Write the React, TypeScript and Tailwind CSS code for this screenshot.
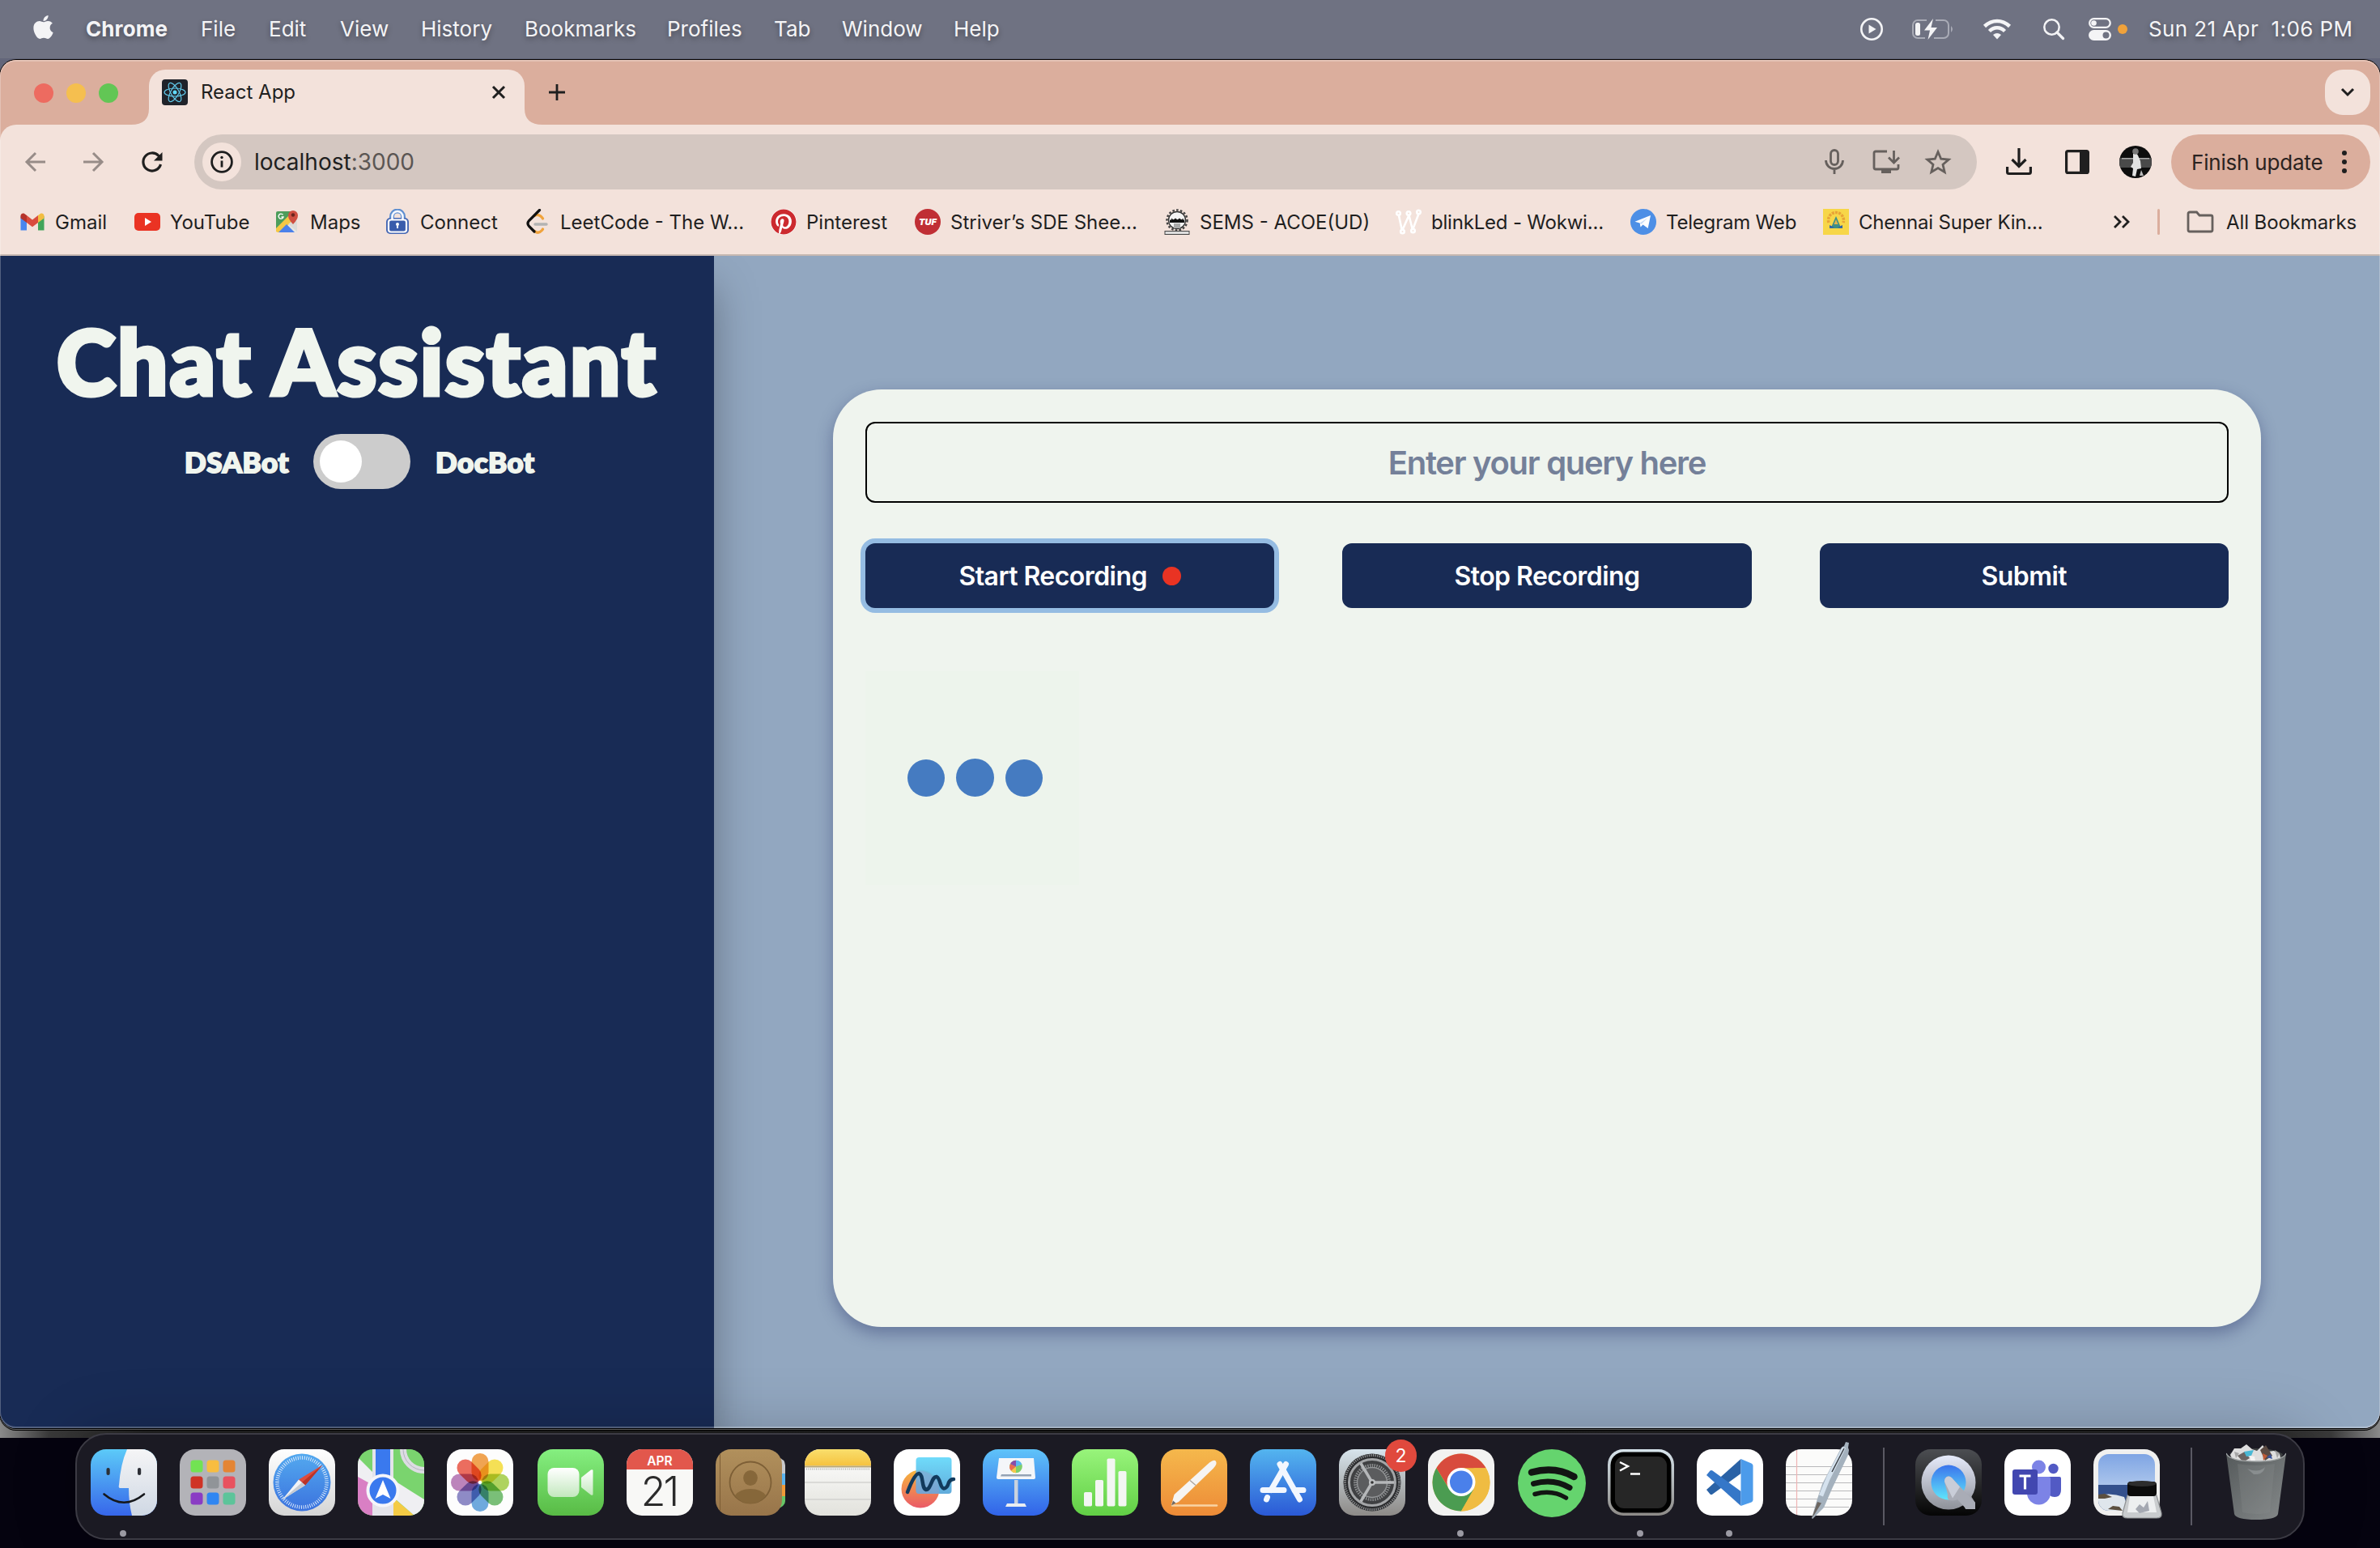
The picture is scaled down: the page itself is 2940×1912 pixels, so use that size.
import React from "react";
import { FaApple, FaPinterest } from "react-icons/fa";

const MENU: [string, string][] = [
  ["File", "w-[84px]"],
  ["Edit", "w-[88px]"],
  ["View", "w-[100px]"],
  ["History", "w-[128px]"],
  ["Bookmarks", "w-[176px]"],
  ["Profiles", "w-[132px]"],
  ["Tab", "w-[84px]"],
  ["Window", "w-[138px]"],
  ["Help", "w-[80px]"],
];

function MenuBar() {
  return (
    <header className="flex h-[72px] items-center bg-[#6f7282] pb-px pl-10 text-[26px] leading-none text-[#f4f4f6] [text-shadow:0_3px_6px_rgba(0,0,0,0.35)]">
      <FaApple className="mb-1 h-[33px] w-[27px] shrink-0" />
      <span className="ml-[39px] w-[142px] text-[26px] font-bold tracking-[0.1px]">Chrome</span>
      {MENU.map(([t, w]) => (
        <span key={t} className={w + " whitespace-nowrap"}>
          {t}
        </span>
      ))}
      <div className="ml-auto flex items-center pr-[34px]">
        <svg className="h-[30px] w-[30px]" viewBox="0 0 30 30" fill="none">
          <circle cx="15" cy="15" r="12.7" stroke="#f4f4f6" strokeWidth="2.6" />
          <path d="M11.5 9.5v11l9-5.5z" fill="#f4f4f6" />
        </svg>
        <svg className="ml-[33px] h-[30px] w-[54px]" viewBox="0 0 54 30" fill="none">
          <path d="M20 4H9a6 6 0 0 0-6 6v10a6 6 0 0 0 6 6h9M31 4h10a6 6 0 0 1 6 6v10a6 6 0 0 1-6 6H29" stroke="#a9abb6" strokeWidth="2" />
          <path d="M50 11q4 4 0 8z" fill="#a9abb6" />
          <rect x="6" y="7" width="6" height="16" rx="2.5" fill="#f4f4f6" />
          <path d="M28 2L17 16.5h7L21.500 28 33 13h-7.500z" fill="#f4f4f6" />
        </svg>
        <svg className="ml-[35px] h-[28px] w-[36px]" viewBox="0 0 36 28" fill="none">
          <path d="M2.500 10.500Q9.500 4 18 4t15.500 6.500" stroke="#f4f4f6" strokeWidth="4.600" />
          <path d="M8.500 16.500Q12.500 12.300 18 12.300t9.500 4.200" stroke="#f4f4f6" strokeWidth="4.400" />
          <path d="M18 26.500l-5-5.500q5-4 10 0z" fill="#f4f4f6" />
        </svg>
        <svg className="ml-[38px] h-[28px] w-[28px]" viewBox="0 0 28 28" fill="none">
          <circle cx="11.500" cy="11.500" r="9.200" stroke="#f4f4f6" strokeWidth="2.500" />
          <path d="M18 18l7.500 7.500" stroke="#f4f4f6" strokeWidth="3.200" strokeLinecap="round" />
        </svg>
        <svg className="ml-[28px] h-[30px] w-[30px]" viewBox="0 0 30 30">
          <rect x="2.200" y="2.200" width="25.500" height="10.600" rx="5.300" fill="none" stroke="#f4f4f6" strokeWidth="2.300" />
          <circle cx="7.500" cy="7.500" r="3.300" fill="#f4f4f6" />
          <rect x="1" y="16" width="28" height="13" rx="6.500" fill="#f4f4f6" />
          <circle cx="22.500" cy="22.500" r="4" fill="#6f7282" />
        </svg>
        <span className="ml-[7px] size-3 rounded-full bg-[#f0a23b]" />
        <span className="ml-[26px] w-[252px] whitespace-pre text-right tracking-[0.4px]">Sun 21 Apr  1:06 PM</span>
      </div>
    </header>
  );
}

function ReactFavicon() {
  return (
    <svg className="size-8" viewBox="0 0 32 32" fill="none">
      <rect width="32" height="32" rx="4" fill="#20232a" />
      <g stroke="#61c9ea" strokeWidth="1.200">
        <ellipse cx="16" cy="16" rx="13" ry="5" />
        <ellipse cx="16" cy="16" rx="13" ry="5" transform="rotate(60 16 16)" />
        <ellipse cx="16" cy="16" rx="13" ry="5" transform="rotate(120 16 16)" />
      </g>
      <circle cx="16" cy="16" r="2.500" fill="#61dafb" />
    </svg>
  );
}

function TabStrip() {
  return (
    <div className="flex h-20 items-end bg-[#dbae9d] pl-[42px] pr-3">
      <div className="flex h-[68px] w-[120px] gap-4 pt-[17px]">
        <span className="size-6 rounded-full bg-[#ed6b60]" />
        <span className="size-6 rounded-full bg-[#f5bf4f]" />
        <span className="size-6 rounded-full bg-[#62c655]" />
      </div>
      <svg className="h-[20px] w-[22px]" viewBox="0 0 22 20">
        <path d="M22 0V20H0Q22 20 22 0" fill="#f3e2db" />
      </svg>
      <div className="flex h-[68px] w-[464px] items-center rounded-t-[20px] bg-[#f3e2db] pb-3 pl-4">
        <ReactFavicon />
        <span className="ml-4 grow text-[24px] text-[#1f1f1f]">React App</span>
        <svg className="mr-[23px] size-[18px]" viewBox="0 0 18 18">
          <path d="M2 2l14 14M16 2L2 16" stroke="#1f1f1f" strokeWidth="3" />
        </svg>
      </div>
      <svg className="h-[20px] w-[22px]" viewBox="0 0 22 20">
        <path d="M0 0V20H22Q0 20 0 0" fill="#f3e2db" />
      </svg>
      <svg className="mb-[30px] ml-[8px] size-5" viewBox="0 0 20 20">
        <path d="M10 0v20M0 10h20" stroke="#1f1f1f" strokeWidth="2.800" />
      </svg>
      <div className="mb-3 ml-auto flex size-14 items-center justify-center rounded-[22px] bg-[#f3e2db]">
        <svg className="h-3 w-[18px]" viewBox="0 0 18 12" fill="none">
          <path d="M2 2l7 7 7-7" stroke="#1f1f1f" strokeWidth="3" />
        </svg>
      </div>
    </div>
  );
}

function Toolbar() {
  return (
    <div className="rounded-t-[20px] bg-[#f3e2db] flex h-[92px] items-center pl-7 pr-3">
      <svg className="size-8" viewBox="0 0 32 32" fill="none" stroke="#978c88" strokeWidth="3">
        <path d="M28 16H6M16 5L5 16l11 11" />
      </svg>
      <svg className="ml-[39px] size-8" viewBox="0 0 32 32" fill="none" stroke="#978c88" strokeWidth="3">
        <path d="M4 16h22M16 5l11 11-11 11" />
      </svg>
      <svg className="ml-[41px] size-8" viewBox="0 0 32 32" fill="none" stroke="#1f1f1f" strokeWidth="3.200">
        <path d="M26.500 19A11 11 0 1 1 24 8.500L27 12" />
        <path d="M28.500 4v10.500H18z" fill="#1f1f1f" stroke="none" />
      </svg>
      <div className="ml-9 flex h-[68px] w-[2202px] items-center rounded-full bg-[#d4c7c1] pl-[10px] pr-[31px]">
        <div className="flex size-12 items-center justify-center rounded-full bg-[#f3e2db]">
          <svg className="size-7" viewBox="0 0 28 28" fill="none">
            <circle cx="14" cy="14" r="12.400" stroke="#1f1f1f" strokeWidth="2.800" />
            <path d="M14 12.500v8" stroke="#1f1f1f" strokeWidth="2.800" />
            <circle cx="14" cy="8.500" r="1.700" fill="#1f1f1f" />
          </svg>
        </div>
        <span className="ml-4 grow text-[28px] leading-none text-[#1f1f1f]">
          localhost<span className="text-[#5b5654]">:3000</span>
        </span>
        <svg className="h-[34px] w-[26px]" viewBox="0 0 26 34" fill="none" stroke="#66605d" strokeWidth="2.800">
          <rect x="8.500" y="2.500" width="9" height="18" rx="4.500" />
          <path d="M2.500 15a10.500 10.500 0 0 0 21 0M13 25.500V32" />
        </svg>
        <svg className="ml-[33px] h-[32px] w-[36px]" viewBox="0 0 36 32" fill="none" stroke="#66605d" strokeWidth="2.800">
          <path d="M19 3H5a2 2 0 0 0-2 2v18a2 2 0 0 0 2 2h26a2 2 0 0 0 2-2v-4" />
          <path d="M27.500 2v14M21 10.500l6.500 6.500 6.500-6.500" />
          <path d="M12 25h12v5H12z" fill="#66605d" stroke="none" />
        </svg>
        <svg className="ml-[29px] size-[34px]" viewBox="0 0 34 34" fill="none" stroke="#66605d" strokeWidth="2.800">
          <path d="M17 4.500l3.700 8.700 9.500.8-7.200 6.200 2.200 9.300L17 24.600l-8.200 4.900L11 20.200 3.800 14l9.500-.8z" />
        </svg>
      </div>
      <svg className="ml-[35px] h-[34px] w-[34px]" viewBox="0 0 34 34" fill="none" stroke="#1f1f1f" strokeWidth="3.200">
        <path d="M17 0v22M8.500 14L17 22.500 25.500 14M2.600 23v6.500a2 2 0 0 0 2 2h24.800a2 2 0 0 0 2-2V23" />
      </svg>
      <svg className="ml-10 h-[30px] w-[30px]" viewBox="0 0 30 30">
        <rect x="1.600" y="1.600" width="26.800" height="26.800" rx="2" fill="none" stroke="#1f1f1f" strokeWidth="3.200" />
        <path d="M18 1h10v28H18z" fill="#1f1f1f" />
      </svg>
      <svg className="ml-[37px] size-10" viewBox="0 0 40 40">
        <defs>
          <clipPath id="avatar">
            <circle cx="20" cy="20" r="20" />
          </clipPath>
        </defs>
        <g clipPath="url(#avatar)">
          <path d="M0 0h40v40H0z" fill="#0d0d0d" />
          <path d="M0 15h40v12H0z" fill="#4a4a4a" />
          <path d="M3 15h34v1.500H3z" fill="#aaa" />
          <path d="M17 10q4-3 6 2l3 7 1 9-5 1-2 9-4-1 1-9-3-2 3-5z" fill="#e2e2e2" />
          <circle cx="20" cy="7" r="3.800" fill="#777" />
          <path d="M27 30l3 7h-5z" fill="#bbb" />
        </g>
      </svg>
      <div className="ml-6 flex h-[68px] w-[246px] items-center rounded-full bg-[#dbae9d] pl-[25px]">
        <span className="w-[176px] whitespace-nowrap pt-[2px] text-[26px] leading-none tracking-[-0.2px] text-[#2a2220]">
          Finish update
        </span>
        <div className="ml-[10px] flex flex-col gap-[5px]">
          <span className="size-[6px] rounded-full bg-[#1f1f1f]" />
          <span className="size-[6px] rounded-full bg-[#1f1f1f]" />
          <span className="size-[6px] rounded-full bg-[#1f1f1f]" />
        </div>
      </div>
    </div>
  );
}

const GmailIcon = (
  <svg className="size-8" viewBox="0 0 32 32">
    <path d="M1.500 9v17.500H9V14z" fill="#4a86ee" />
    <path d="M30.500 9v17.500H23V14z" fill="#42a55a" />
    <path d="M1.500 8.500Q2 5 5.500 5.500L9 8v9l-7.500-5.500z" fill="#b5332b" />
    <path d="M30.500 8.500Q30 5 26.500 5.500L23 8v9l7.500-5.500z" fill="#f2bd42" />
    <path d="M9 8l7 5.500L23 8v9l-7 5.300L9 17z" fill="#d94c3e" />
  </svg>
);
const YouTubeIcon = (
  <svg className="size-8" viewBox="0 0 32 32">
    <rect y="5" width="32" height="22" rx="5" fill="#ea3323" />
    <path d="M13 11v10l8-5z" fill="#fff" />
  </svg>
);
const MapsIcon = (
  <svg className="size-8" viewBox="0 0 32 32">
    <rect x="2" y="3" width="26" height="26" rx="2" fill="#e8e6e2" />
    <path d="M2 5q0-2 2-2h18v6L2 28z" fill="#4d9d5b" />
    <path d="M2 28V24L19 7l6 5L8 29H4z" fill="#f5c844" />
    <path d="M5 29l10-10 10 10z" fill="#4b81ea" />
    <path d="M17 19l11 9V15l-5-1z" fill="#dcdad6" />
    <path d="M23 19q-6-6-6-11a6 6 0 0 1 12 0q0 5-6 11" fill="#cf4f41" />
    <circle cx="23" cy="7.500" r="2.200" fill="#6b241d" />
    <path d="M10.500 7.300A3 3 0 1 0 11 10H8.500" stroke="#fff" strokeWidth="1.400" fill="none" />
  </svg>
);
const ConnectIcon = (
  <svg className="size-8" viewBox="0 0 32 32" fill="none">
    <path d="M9 14V9.500a7 7 0 0 1 14 0V14" stroke="#5f8fd0" strokeWidth="6" />
    <rect x="2" y="11" width="28" height="20" rx="5" fill="#4668b4" />
    <path d="M9.500 14V9.500a6.500 6.500 0 0 1 13 0V14" stroke="#f5f8ff" strokeWidth="2.600" />
    <rect x="5" y="13.500" width="22" height="15" rx="3" fill="#3a5cab" stroke="#fff" strokeWidth="2.200" />
    <circle cx="16" cy="19" r="2" fill="#fff" />
    <path d="M16 19v5" stroke="#fff" strokeWidth="2" />
  </svg>
);
const LeetIcon = (
  <svg className="size-8" viewBox="0 0 32 32" fill="none" strokeLinecap="round">
    <path d="M12.500 8.500Q17 5.500 21.500 10.500l1 1.500M12.500 27.500Q17 31.500 21.500 26.500l1-1.500" stroke="#f0a33c" strokeWidth="3.200" />
    <path d="M18.500 1.500L5.500 14.500q-3 3.500 0 7L12 28" stroke="#111" strokeWidth="3.200" />
    <path d="M13 19h14" stroke="#b3b3b3" strokeWidth="3.400" />
  </svg>
);
const TufIcon = (
  <span className="flex size-8 items-center justify-center rounded-full bg-[#c02f35] text-[11px] font-black italic leading-none text-white">
    TUF
  </span>
);
const SemsIcon = (
  <svg className="size-8" viewBox="0 0 32 32" fill="none">
    <circle cx="16" cy="14" r="12.500" stroke="#444" strokeWidth="2.500" strokeDasharray="2.600 2.200" />
    <circle cx="16" cy="14" r="10.500" fill="#f4f4f4" stroke="#333" strokeWidth="1.300" />
    <path d="M7 13.500h18v3.500H7z" fill="#111" />
    <path d="M9 11.500l2.500 2 2.500-2 2.500 2 2.500-2 2.500 2 2-2v3H9z" fill="#111" />
    <path d="M12 18h8v6h-8z" fill="#aaa" />
    <rect x="1" y="27.500" width="30" height="4" fill="#ddd" stroke="#444" />
  </svg>
);
const WokwiIcon = (
  <svg className="size-8" viewBox="0 0 32 32" fill="none" stroke="#fff" strokeWidth="2.600">
    <path d="M3.500 6l4.500 21L16 9M16 6l5 20 7.500-20" />
    <circle cx="3.500" cy="5.500" r="2.300" fill="#f3e2db" />
    <circle cx="16" cy="5.500" r="2.300" fill="#f3e2db" />
    <circle cx="28.500" cy="4" r="2.300" fill="#f3e2db" />
    <circle cx="8.500" cy="28" r="2.300" fill="#f3e2db" />
    <circle cx="21.500" cy="27" r="2.300" fill="#f3e2db" />
  </svg>
);
const TelegramIcon = (
  <svg className="size-8" viewBox="0 0 32 32">
    <circle cx="16" cy="16" r="16" fill="#4d8fe6" />
    <path d="M5.500 15.800L25 8l-3.300 16-6.200-4.500-3 3-.8-5z" fill="#fff" />
    <path d="M11.700 17.500L21.500 11l-8 8z" fill="#c8dcf6" />
  </svg>
);
const ChennaiIcon = (
  <svg className="size-8" viewBox="0 0 32 32">
    <path d="M0 0h32v32H0z" fill="#f7d648" />
    <path d="M7 17a9.500 9.500 0 1 1 18 0" fill="none" stroke="#e8a336" strokeWidth="3.500" strokeDasharray="3 1.200" />
    <path d="M16 9l6.500 15h-13z" fill="#3f8f86" />
    <path d="M8 20l6 3-6 1zM24 20l-6 3 6 1z" fill="#2c5fa8" />
    <path d="M16 13l2.500 6h-5z" fill="#e6b44a" />
  </svg>
);

const BOOKMARKS: [React.ReactNode, string, string][] = [
  [GmailIcon, "Gmail", "w-[142px]"],
  [YouTubeIcon, "YouTube", "w-[173px]"],
  [MapsIcon, "Maps", "w-[136px]"],
  [ConnectIcon, "Connect", "w-[173px]"],
  [LeetIcon, "LeetCode - The W...", "w-[304px]"],
  [<FaPinterest key="p" className="size-8 rounded-full bg-white text-[#cc2a2f]" />, "Pinterest", "w-[178px]"],
  [TufIcon, "Striver’s SDE Shee...", "w-[308px]"],
  [SemsIcon, "SEMS - ACOE(UD)", "w-[286px]"],
  [WokwiIcon, "blinkLed - Wokwi...", "w-[290px] tracking-[-0.2px]"],
  [TelegramIcon, "Telegram Web", "w-[238px] tracking-[-0.2px]"],
  [ChennaiIcon, "Chennai Super Kin...", "w-[290px] tracking-[-0.2px]"],
];

function BookmarksBar() {
  return (
    <div className="flex h-[70px] items-center border-b-2 border-[#c6b8b1] bg-[#f3e2db] pb-[12px] pl-6 text-[24px] leading-none text-[#1f1f1f]">
      {BOOKMARKS.map(([icon, label, w]) => (
        <div key={label} className={w + " flex shrink-0 items-center gap-3 whitespace-nowrap"}>
          {icon}
          <span className="pt-px">{label}</span>
        </div>
      ))}
      <svg className="ml-[68px] h-4 w-[22px]" viewBox="0 0 22 16" fill="none" stroke="#1f1f1f" strokeWidth="2.800">
        <path d="M2 1l7 7-7 7M12 1l7 7-7 7" />
      </svg>
      <span className="ml-[33px] h-8 w-[3px] rounded bg-[#dbae9d]" />
      <svg className="ml-[33px] h-[28px] w-[34px]" viewBox="0 0 34 28" fill="none" stroke="#66605d" strokeWidth="2.800">
        <path d="M2 4a2 2 0 0 1 2-2h8.500l3.500 4h14a2 2 0 0 1 2 2v16a2 2 0 0 1-2 2H4a2 2 0 0 1-2-2z" />
      </svg>
      <span className="ml-[15px] whitespace-nowrap pt-px tracking-[-0.1px]">All Bookmarks</span>
    </div>
  );
}

function Sidebar() {
  return (
    <aside className="z-10 flex h-full w-[882px] shrink-0 flex-col items-center bg-[#182b55] font-['Lato'] font-black text-[#f0f5ee] shadow-[4px_32px_50px_-6px_rgba(0,0,0,0.34)]">
      <h1 className="mt-[59px] h-[140px] whitespace-nowrap text-[110px] leading-[140px] tracking-[2.5px] [-webkit-text-stroke:5px_#f0f5ee]">
        Chat Assistant
      </h1>
      <div className="mt-[21px] flex h-[68px] items-center pl-[4px] text-[35px] tracking-[0.5px] [-webkit-text-stroke:2px_#f0f5ee]">
        <span className="w-[128px] whitespace-nowrap">DSABot</span>
        <div className="mx-[31px] flex h-[68px] w-[120px] items-center rounded-full bg-[#cccccc] pl-2">
          <span className="size-[52px] rounded-full bg-white" />
        </div>
        <span className="w-[120px] whitespace-nowrap">DocBot</span>
      </div>
    </aside>
  );
}

function Page() {
  return (
    <div className="flex grow overflow-hidden bg-[#92a7c0]">
      <Sidebar />
      <main className="flex grow justify-center pt-[165px]">
        <section className="h-[1158px] w-[1764px] rounded-[60px] bg-[#eff4ee] px-10 pt-10 shadow-[0_8px_20px_rgba(35,45,100,0.4)]">
          <div className="flex h-[100px] items-center justify-center rounded-xl border-2 border-black pt-[2px] text-[40px] font-semibold tracking-[-1.3px] text-[#748099]">
            Enter your query here
          </div>
          <div className="mt-[50px] grid grid-cols-3 gap-[84px] text-[32px] font-semibold tracking-[-0.55px] text-white">
            <button className="flex h-20 items-center justify-center gap-[19px] rounded-xl bg-[#182b55] pt-px shadow-[0_0_0_6px_#95bce2]">
              Start Recording
              <span className="size-[23px] rounded-full bg-[#e93323]" />
            </button>
            <button className="h-20 rounded-xl bg-[#182b55] pt-[2px]">Stop Recording</button>
            <button className="h-20 rounded-xl bg-[#182b55] pt-[2px]">Submit</button>
          </div>
          <div className="mt-[78px] flex h-[264px] w-[264px] items-center justify-center gap-[14px] bg-[#edf4ec] pb-px pl-[7px]">
            <span className="size-[46px] rounded-full bg-[#457bc1]" />
            <span className="size-[47px] rounded-full bg-[#457bc1]" />
            <span className="size-[46px] rounded-full bg-[#457bc1]" />
          </div>
        </section>
      </main>
    </div>
  );
}

function Tile({ bg, children }: { bg: string; children?: React.ReactNode }) {
  return (
    <svg className="size-[82px] overflow-hidden rounded-[19px]" viewBox="0 0 82 82">
      <rect width="82" height="82" fill={bg} />
      {children}
    </svg>
  );
}

function Grad({ id, a, b, diag }: { id: string; a: string; b: string; diag?: boolean }) {
  return (
    <linearGradient id={id} x1="0" y1="0" x2={diag ? "1" : "0"} y2="1">
      <stop offset="0" stopColor={a} />
      <stop offset="1" stopColor={b} />
    </linearGradient>
  );
}

function Finder() {
  return (
    <Tile bg="url(#finder)">
      <path d="M45 0H82V82H51Q47 66 47 48H36Q34 47 35 44Q37 18 45 0" fill="url(#finderw)" />
      <rect x="19.500" y="23" width="4.200" height="9" rx="2" fill="#2c2f36" />
      <rect x="58" y="23" width="4.200" height="9" rx="2" fill="#2c2f36" />
      <path d="M16.500 55.500Q41 76 66 55.500" stroke="#16181c" strokeWidth="2.600" fill="none" strokeLinecap="round" />
    </Tile>
  );
}

const PADS = ["#72e353", "#f8bd40", "#e48535", "#cf3325", "#909498", "#e8525f", "#8a3cc4", "#2f86f2", "#5cc49a"];
function Launchpad() {
  return (
    <Tile bg="#b3b3b8">
      {PADS.map((c, i) => (
        <rect key={c} x={13.5 + (i % 3) * 20} y={13.5 + Math.floor(i / 3) * 20} width="15" height="15" rx="3.500" fill={c} />
      ))}
    </Tile>
  );
}

function Safari() {
  return (
    <Tile bg="url(#silver)">
      <circle cx="41" cy="41" r="35.500" fill="url(#safari)" />
      <circle cx="41" cy="41" r="30.500" fill="none" stroke="#e8f2fd" strokeWidth="4.500" strokeDasharray="0.900 1.760" />
      <path d="M66.500 19.500L37 37.500 45 44.500z" fill="#dd4b3c" />
      <path d="M16.500 62.500L37 37.500 45 44.500z" fill="#f1f3f6" />
      <path d="M66.500 19.500L41 41l4 3.500z" fill="#b83429" />
      <path d="M16.500 62.500L41 41l4 3.500z" fill="#c6cbd2" />
    </Tile>
  );
}

function MapsTile() {
  return (
    <Tile bg="#7ad46e">
      <path d="M0 30L30 56V82H0z" fill="#d97fc4" />
      <path d="M44 60L70 82H44z" fill="#f4cb45" />
      <path d="M0 10L18 28 44 38 82 62V82H70L40 56 0 34z" fill="#efeff2" />
      <path d="M18 0h26v82H18z" fill="#e4e4ea" />
      <path d="M22 0h18v40H22z" fill="#3a79ee" />
      <circle cx="82" cy="0" r="26" fill="#7ad46e" stroke="#dcdce2" strokeWidth="8" />
      <circle cx="82" cy="0" r="26" fill="none" stroke="#b4b4c0" strokeWidth="1" />
      <circle cx="31" cy="51" r="18.500" fill="#3a79ee" stroke="#f5f5fa" strokeWidth="4" />
      <path d="M31 38l9.500 23L31 56l-9.500 5z" fill="#fff" />
    </Tile>
  );
}

const PETALS = ["#f0993a", "#f6de3f", "#a6cf4a", "#69b866", "#5c9fdb", "#7f7cc0", "#b574b4", "#ea5a4a"];
function Photos() {
  return (
    <Tile bg="#fdfdfd">
      {PETALS.map((c, i) => (
        <rect key={c} x="30.500" y="5" width="21" height="34" rx="10.500" fill={c} fillOpacity="0.880" transform={`rotate(${i * 45} 41 41)`} className="mix-blend-multiply" />
      ))}
    </Tile>
  );
}

function FaceTime() {
  return (
    <Tile bg="url(#green)">
      <rect x="12.500" y="23" width="39" height="36" rx="8" fill="url(#mint)" />
      <path d="M54 35L66 25.500q2.500-1 2.500 1v29q0 2-2.500 1L54 47z" fill="url(#mint)" />
    </Tile>
  );
}

function Calendar() {
  return (
    <Tile bg="#f8f8f6">
      <path d="M0 0h82v25H0z" fill="#e2574c" />
      <text x="41" y="19.500" textAnchor="middle" className="font-['Inter'] text-[15.500px] font-semibold" fill="#fff">
        APR
      </text>
      <text x="40" y="69.500" textAnchor="middle" className="font-['Inter'] text-[50px] font-light tracking-[-3px]" fill="#2b2b2b">
        21
      </text>
    </Tile>
  );
}

function Contacts() {
  return (
    <svg className="h-[82px] w-[86px]" viewBox="0 0 86 82">
      <path d="M76 10q10 2 10 10v10H76z" fill="#c9c9cc" />
      <path d="M76 30h10v14H76z" fill="#5bb3ee" />
      <path d="M76 44h10v14H76z" fill="#f19a38" />
      <path d="M76 58h10v6q0 6-10 10z" fill="#66c667" />
      <rect width="82" height="82" rx="19" fill="url(#brown)" />
      <path d="M5.500 6v70" stroke="#7d5d34" strokeWidth="1" />
      <circle cx="43" cy="41" r="25.500" fill="none" stroke="#7d5f36" strokeWidth="1.800" />
      <ellipse cx="43" cy="35.500" rx="8.800" ry="9.500" fill="#86673a" />
      <path d="M24 57q6-8 19-8t19 8q-7 10-19 10t-19-10" fill="#86673a" />
    </svg>
  );
}

function Notes() {
  return (
    <Tile bg="url(#paper)">
      <path d="M0 0h82v20.500H0z" fill="url(#yellow)" />
      <path d="M0 20.500h82v2H0z" fill="#b9a878" />
      <path d="M2 24.500h78" stroke="#b0b0ac" strokeWidth="2" strokeDasharray="1 1.400" />
      <path d="M0 41h82M0 62h82" stroke="#d2d2d0" strokeWidth="1.500" />
    </Tile>
  );
}

function Freeform() {
  return (
    <Tile bg="#fff">
      <circle cx="33" cy="49" r="23.500" fill="url(#coral)" />
      <rect x="27.500" y="10" width="44" height="45" rx="4" fill="url(#cyan)" fillOpacity="0.920" />
      <path d="M30 27a23.500 23.500 0 0 1 26 22v6H31q-3.500 0-3.500-3.500V27z" fill="#8aa5d4" fillOpacity="0.550" />
      <path d="M17 53Q26 29 31.500 30C37 32 34 48 40 50C46 50 47 33 53 34C58 36 57 48 62 48.500Q66 48.500 68 41Q70 37 74 37" fill="none" stroke="#123a5c" strokeWidth="4.500" strokeLinecap="round" />
    </Tile>
  );
}

function Keynote() {
  return (
    <Tile bg="url(#blue)">
      <path d="M39 38h4.500v31H39z" fill="#c9d2de" />
      <path d="M30 67h22l2 4H28z" fill="#e9edf2" />
      <path d="M20 11h43l2 24q0 2-2 2H19q-2 0-2-2z" fill="#f4f6f9" />
      <path d="M23 31h37v2.500H22z" fill="#94a3b5" />
      <circle cx="41" cy="21.500" r="7.800" fill="#7fcf6b" />
      <path d="M41 21.500V13.700a7.800 7.800 0 0 1 7.200 5z" fill="#5ab8f3" />
      <path d="M41 21.500V13.700a7.800 7.800 0 0 0-7 4.500z" fill="#8a4da8" />
      <path d="M41 21.500l-7-3.300a7.800 7.800 0 0 0 1 8.500z" fill="#ee6a4f" />
      <path d="M41 21.500l-6 5.200a7.800 7.800 0 0 0 6 2.600z" fill="#f6c84c" />
    </Tile>
  );
}

function Numbers() {
  return (
    <Tile bg="url(#green2)">
      <g fill="#f3f6f2">
        <rect x="15" y="53" width="10" height="17.500" rx="1.800" />
        <rect x="29" y="38" width="10" height="32.500" rx="1.800" />
        <rect x="43.500" y="11.500" width="10" height="59" rx="1.800" />
        <rect x="57.500" y="27" width="10" height="43.500" rx="1.800" />
      </g>
    </Tile>
  );
}

function Pages() {
  return (
    <Tile bg="url(#orange)">
      <path d="M14 69.500h55" stroke="#f9d3a4" strokeWidth="2.500" strokeLinecap="round" />
      <path d="M13 69l3.500-13L60 16.500q6-4.500 8-1.500T65 23.500L22 65z" fill="#f6f4f2" />
      <path d="M36 38.500l7 6" stroke="#a9a29b" strokeWidth="1.300" />
      <path d="M13 69.500l2-6 3.500 3z" fill="#6f6963" />
    </Tile>
  );
}

function AppStore() {
  return (
    <Tile bg="url(#azure)">
      <g stroke="#f2f7fe" strokeWidth="7" strokeLinecap="round" fill="none">
        <path d="M16 50.500h26M55 50.500h11" />
        <path d="M44.500 18.500L26 50.500M21.500 59.500l-1 2.500" />
        <path d="M37 18.500L61.500 62" />
      </g>
    </Tile>
  );
}

function Settings() {
  return (
    <div className="relative size-[82px]">
      <Tile bg="url(#steel)">
        <circle cx="41" cy="41" r="35.500" fill="#2a2b2d" />
        <circle cx="41" cy="41" r="33.500" fill="none" stroke="#8b8d8f" strokeWidth="3" strokeDasharray="1.300 1.300" />
        <circle cx="41" cy="41" r="28.500" fill="#3f4042" stroke="#a3a5a7" strokeWidth="3" />
        <circle cx="41" cy="41" r="21" fill="#2c2d2f" stroke="#87898b" strokeWidth="4" strokeDasharray="1.600 1.200" />
        <circle cx="41" cy="41" r="18.500" fill="#5b5c5e" stroke="#939597" strokeWidth="1.500" />
        <path d="M41 41h27M41 41L27 17.500M41 41L27 64.500" stroke="#b5b7b9" strokeWidth="3.500" />
        <circle cx="41" cy="41" r="4" fill="#bfc1c3" />
        <circle cx="41" cy="41" r="1.800" fill="#333" />
      </Tile>
      <span className="absolute -top-3 left-[57px] flex h-10 w-[39px] items-center justify-center rounded-full bg-[#e0493d] text-[23px] leading-none text-white">
        2
      </span>
    </div>
  );
}

function ChromeTile() {
  return (
    <Tile bg="#f2f2f1">
      <circle cx="41" cy="41" r="35.500" fill="#f0bc42" />
      <path d="M10.300 23.200A35.500 35.500 0 0 1 71.700 23.200H41L27 50z" fill="#d84b3d" />
      <path d="M10.300 23.200A35.500 35.500 0 0 0 41 76.500L56 50 41 41 26 49z" fill="#4b9c51" />
      <path d="M71.700 23.200A35.500 35.500 0 0 1 41 76.500L56.500 50V23.200z" fill="#f0bc42" />
      <circle cx="41" cy="40.500" r="17.500" fill="#fff" />
      <circle cx="41" cy="40.500" r="14" fill="#4a80ea" />
    </Tile>
  );
}

function Spotify() {
  return (
    <svg className="size-[84px]" viewBox="0 0 84 84" fill="none" stroke="#121513" strokeLinecap="round">
      <circle cx="42" cy="42" r="42" fill="#65d46e" stroke="none" />
      <path d="M17 28.500Q46 20.500 69.500 34" strokeWidth="8.500" />
      <path d="M19.500 42.500Q44 35.500 64 47.500" strokeWidth="7" />
      <path d="M21 55.500Q42 49.500 59.500 60" strokeWidth="5.500" />
    </svg>
  );
}

function Terminal() {
  return (
    <Tile bg="url(#steel)">
      <rect x="3.500" y="3.500" width="75" height="75" rx="16" fill="#000" />
      <rect x="9" y="9" width="64" height="64" rx="11" fill="#262626" />
      <path d="M15 16l10 5-10 5.500" stroke="#fff" strokeWidth="2.400" fill="none" />
      <path d="M28 30.500h12" stroke="#fff" strokeWidth="2.400" />
    </Tile>
  );
}

function VSCode() {
  return (
    <Tile bg="#fff">
      <path d="M12 50l4.500 5.500q1.500 1 3 0L54.500 30V12z" fill="#2a62a6" />
      <path d="M12 32l4.500-5.500q1.500-1 3 0L54.500 52v18z" fill="#3577c8" />
      <path d="M54.500 12l13 5.500q2 1 2 3v42q0 2-2 3l-13 4.500z" fill="#4c9bea" />
    </Tile>
  );
}

function TextEdit() {
  return (
    <svg className="-mt-[10px] h-[96px] w-[82px]" viewBox="0 -10 82 96">
      <rect width="82" height="82" rx="19" fill="#fbfbfa" />
      <path d="M0 21.500h82M0 31.500h82M0 41.500h82M0 51.500h82M0 61.500h82M4 71.500h74" stroke="#b9b9bb" strokeWidth="1.100" />
      <path d="M13.500 1v80" stroke="#efb4b4" strokeWidth="1.200" />
      <path d="M70 -3l2-1 2-5 4 1-1 6 1 3-1 6-20 42-10 23-14 14-1-1 7-24 6-18 23-44z" fill="#a4b1bd" />
      <path d="M70 -3l4 1.500-20 40-8 20-5-2 10-24z" fill="#d5e2ee" />
      <path d="M72 -1L57 28" stroke="#3c4046" strokeWidth="1.500" />
      <path d="M39 65l5 1.500-8 13-4 6z" fill="#6b6560" />
    </svg>
  );
}

function QuickTime() {
  return (
    <Tile bg="url(#dark)">
      <path d="M55 58l10-6 9 14v8H62z" fill="#9b9ea6" />
      <circle cx="41" cy="41" r="33.500" fill="url(#silverq)" />
      <circle cx="41" cy="41" r="21.500" fill="url(#qt)" />
      <path d="M36 40q0-6 5-6.500 3 0 6 4L74 66v8H63L52 62q-7 3-11 0-2-2-1-6z" fill="#a9acb6" />
      <path d="M36 40q0-6 5-6.500 3 0 6 4l8 9-9 14z" fill="#c9cdd8" />
    </Tile>
  );
}

function Teams() {
  return (
    <Tile bg="#fff">
      <circle cx="60.500" cy="24" r="6.200" fill="#525ac4" />
      <path d="M54 34h14q2 0 2 2v14q0 9-8 9t-8-8z" fill="#525ac4" />
      <circle cx="42.500" cy="22" r="8.500" fill="#7c83e6" />
      <path d="M28 34h27q2 0 2 2v18a14.500 14.500 0 0 1-29 0z" fill="#7c83e6" />
      <rect x="10" y="25" width="31" height="31" rx="3" fill="#4247b0" />
      <path d="M18.500 33h14M25.500 33v16.500" stroke="#fff" strokeWidth="3.200" />
    </Tile>
  );
}

function Preview() {
  return (
    <svg className="h-[86px] w-[86px]" viewBox="0 0 86 86">
      <rect width="82" height="82" rx="19" fill="#f0f0ef" />
      <clipPath id="pv">
        <rect x="6" y="6" width="70" height="70" rx="13" />
      </clipPath>
      <g clipPath="url(#pv)">
        <path d="M6 6h70v70H6z" fill="url(#sky)" />
        <path d="M6 44h70v32H6z" fill="#33508c" />
        <path d="M6 57q16-4 32 2l6 17H6z" fill="#dfe6ec" />
        <path d="M6 56l8-1 9 4-9 2H6zM18 74l6-4 8 1 4 5z" fill="#5c5040" />
      </g>
      <path d="M42 57h36l6 22q1 6-6 6H42q-7 0-6-6z" fill="#c9ccce" stroke="#8f9294" strokeWidth="1.200" />
      <path d="M45 58h29l4 20H42z" fill="#edeff0" />
      <path d="M52 74l5-6 5 4 5-8 2 12-12 3z" fill="#a5a9b2" />
      <rect x="42" y="40" width="36" height="18" rx="4" fill="#0c0c0c" />
      <ellipse cx="60" cy="42.500" rx="17.500" ry="3.500" fill="#2d2d2d" />
    </svg>
  );
}

function Trash() {
  return (
    <svg className="-mt-2 h-[96px] w-[74px]" viewBox="0 0 74 96">
      <path d="M4 14q8-7 33-7t33 7l-3 9H8z" fill="#3c3f40" />
      <path d="M5 15l5-8 8 0 7-5 7 6 6 2 7-7 6 8 8-1 7 4 2 8-8 7H12z" fill="#dedede" />
      <path d="M14 16l9-5 6 8-8 5z" fill="#6a6462" />
      <path d="M42 9l7-6 8 13-9 6z" fill="#5a4a42" />
      <path d="M22 11l12-2-3 7-6 1z" fill="#49b8d4" />
      <path d="M29 16l6 1 1 6-5 1z" fill="#f3f3f3" />
      <path d="M45 13l6 3-5 6z" fill="#c05a35" />
      <path d="M50 18l5-4 2 6z" fill="#37529a" />
      <path d="M10 11l6 2-4 6zM60 9l6 4-3 6z" fill="#a5a5a5" />
      <path d="M0 13q4 10 37 10t37-10L64 88q-2 7-27 7T10 88z" fill="url(#can)" />
      <path d="M14 26q22 4 46 0l-6 60q-16 4-34 0z" fill="#8a8f90" fillOpacity="0.250" />
      <path d="M26 32q14 6 22-2-2 10-14 9z" fill="#9a9fa0" fillOpacity="0.600" />
      <path d="M0 13q4 10 37 10t37-10" fill="none" stroke="#a0a4a5" strokeWidth="1.300" />
    </svg>
  );
}

function Defs() {
  return (
    <svg className="absolute size-0">
      <defs>
        <Grad id="finder" a="#5ccaf8" b="#3766ea" />
        <Grad id="finderw" a="#f5f5f6" b="#cfd8e4" />
        <Grad id="silver" a="#ffffff" b="#d5d5d5" />
        <Grad id="mint" a="#ffffff" b="#c3e8be" />
        <Grad id="safari" a="#53a9ef" b="#3b72de" />
        <Grad id="green" a="#85ef80" b="#58bb45" />
        <Grad id="green2" a="#98f47b" b="#61cf45" />
        <Grad id="brown" a="#b1905c" b="#98754a" />
        <Grad id="paper" a="#ffffff" b="#e2e2dc" />
        <Grad id="yellow" a="#f9df6d" b="#f6c23f" />
        <Grad id="coral" a="#f6b63c" b="#ea5a68" />
        <Grad id="cyan" a="#63d8fa" b="#54a4d8" />
        <Grad id="blue" a="#5fc3f9" b="#3163e8" />
        <Grad id="orange" a="#f5b84c" b="#ed8b37" />
        <Grad id="azure" a="#54b5ef" b="#2b59d6" />
        <Grad id="steel" a="#d7e4ec" b="#8d8a87" />
        <Grad id="dark" a="#4c4e52" b="#050505" />
        <Grad id="silverq" a="#e6ebfb" b="#8e9199" />
        <Grad id="qt" a="#3b74ec" b="#5fe6fb" />
        <Grad id="sky" a="#7fa5e4" b="#cfdff2" />
        <Grad id="can" a="#555a5b" b="#85898a" diag />
      </defs>
    </svg>
  );
}

const DOCK: { name: string; icon: React.ReactNode; w: string; on?: boolean }[] = [
  { name: "finder", icon: <Finder />, w: "w-[110px]", on: true },
  { name: "launchpad", icon: <Launchpad />, w: "w-[110px]" },
  { name: "safari", icon: <Safari />, w: "w-[110px]" },
  { name: "maps", icon: <MapsTile />, w: "w-[110px]" },
  { name: "photos", icon: <Photos />, w: "w-[112px]" },
  { name: "facetime", icon: <FaceTime />, w: "w-[110px]" },
  { name: "calendar", icon: <Calendar />, w: "w-[110px]" },
  { name: "contacts", icon: <Contacts />, w: "w-[110px]" },
  { name: "notes", icon: <Notes />, w: "w-[110px]" },
  { name: "freeform", icon: <Freeform />, w: "w-[110px]" },
  { name: "keynote", icon: <Keynote />, w: "w-[110px]" },
  { name: "numbers", icon: <Numbers />, w: "w-[110px]" },
  { name: "pages", icon: <Pages />, w: "w-[110px]" },
  { name: "appstore", icon: <AppStore />, w: "w-[110px]" },
  { name: "settings", icon: <Settings />, w: "w-[110px]" },
  { name: "chrome", icon: <ChromeTile />, w: "w-[111px]", on: true },
  { name: "spotify", icon: <Spotify />, w: "w-[111px]" },
  { name: "terminal", icon: <Terminal />, w: "w-[110px]", on: true },
  { name: "vscode", icon: <VSCode />, w: "w-[110px]", on: true },
  { name: "textedit", icon: <TextEdit />, w: "w-[120px]" },
];

function Dock() {
  return (
    <nav className="z-10 mx-auto mt-[6px] flex h-[132px] w-[2754px] rounded-[38px] border-2 border-[#3c3b44] bg-[#1b1a23] pl-[17px] pt-[18px] shadow-[0_0_80px_rgba(0,0,0,0.22)]">
      {DOCK.map((d) => (
        <div key={d.name} className={d.w + " h-[108px] shrink-0"}>
          <div className="h-[100px]">{d.icon}</div>
          {d.on && <div className="ml-[36px] size-2 rounded-full bg-[#9b9aa3]" />}
        </div>
      ))}
      <div className="-mt-[2px] h-24 w-[2px] bg-[#5a5963]" />
      <div className="ml-[38px] w-[110px]">
        <QuickTime />
      </div>
      <div className="w-[110px]">
        <Teams />
      </div>
      <div className="w-[120px]">
        <Preview />
      </div>
      <div className="-mt-[2px] h-24 w-[2px] bg-[#5a5963]" />
      <div className="ml-[42px]">
        <Trash />
      </div>
    </nav>
  );
}

export default function App() {
  return (
    <div className="relative isolate flex h-[1912px] w-[2940px] flex-col overflow-hidden bg-[#05030f] font-['Inter',sans-serif]">
      <Defs />
      <div className="absolute inset-x-0 top-0 -z-10 h-[120px] bg-[#63667a]" />
      <div className="absolute inset-x-0 top-[1730px] -z-10 h-[46px] bg-[linear-gradient(90deg,#8a8a8a_0,#3a3a3a_60px,#222_180px,#1c1c1c_50%,#222_2760px,#3a3a3a_2880px,#8a8a8a_2940px)]" />
      <MenuBar />
      <div className="relative mt-[2px] flex h-[1690px] flex-col overflow-hidden rounded-[20px] bg-[#dbae9d] shadow-[0_0_0_1px_#000,0_1px_0_1px_#666,0_2px_0_1px_#000]">
        <TabStrip />
        <Toolbar />
        <BookmarksBar />
        <Page />
        <div className="pointer-events-none absolute inset-0 z-20 rounded-[20px] border-x border-y-2 border-white/25" />
      </div>
      <Dock />
    </div>
  );
}
